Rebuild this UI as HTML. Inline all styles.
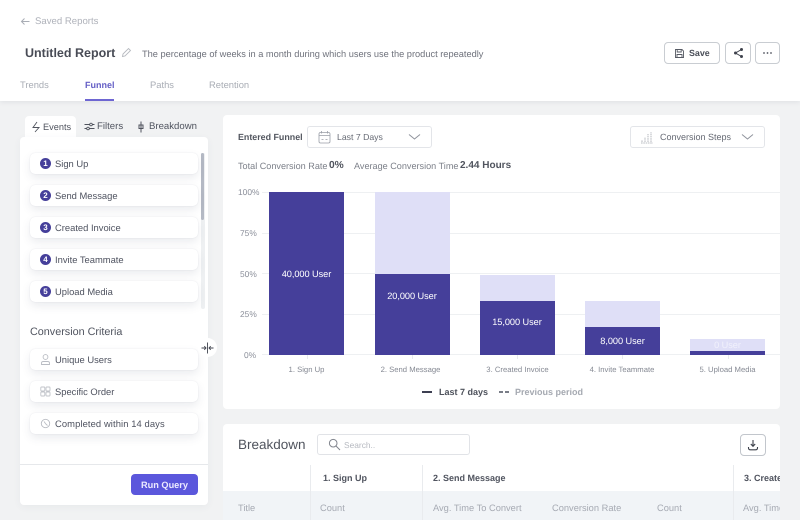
<!DOCTYPE html>
<html><head><meta charset="utf-8">
<style>
html,body{margin:0;padding:0;width:800px;height:520px;overflow:hidden;background:#f1f2f3}
#r{position:relative;width:800px;height:520px;overflow:hidden;font-family:"Liberation Sans",sans-serif;filter:blur(.35px);text-rendering:geometricPrecision}
#r div,#r svg{position:absolute}
.t{white-space:nowrap;line-height:14px;height:14px}
.c{transform:translateX(-50%)}
.card{background:#fff;border-radius:5px;left:30px;width:168px;height:21.5px;box-shadow:0 4px 9px rgba(60,70,100,.1),0 0 1px rgba(60,70,100,.16)}
.n{left:40px;width:11px;height:11px;border-radius:50%;background:#453f9a;color:#fff;font-size:8px;font-weight:bold;line-height:11px;text-align:center}
.lb{font-size:9.4px;color:#4f5360;left:55px}
.ax{font-size:8.4px;color:#8b8f9a}
.g{left:262px;width:518px;height:1px;background:#eef0f2}
.d{background:#453f9a}.l{background:#dfdff7}
.bl{color:#fff;font-size:9.2px;letter-spacing:-.05px}
.xl{font-size:7.7px;color:#858993}
.th{font-size:9px;font-weight:bold;color:#50545f}
.tc{font-size:9.3px;color:#a6aab3}
.btn{background:#fff;border:1px solid #c9cdd2;border-radius:4px;box-sizing:border-box;height:22px;top:42px}
</style></head><body><div id="r">

<div style="left:0;top:0;width:800px;height:101px;background:#fff;box-shadow:0 1px 5px rgba(60,70,90,.1)"></div>

<svg style="left:20px;top:16px" width="11" height="11" viewBox="0 0 11 11" fill="none" stroke="#a9adb5" stroke-width="1"><path d="M9.5 5.5H1.5M4.5 2.5L1.5 5.5L4.5 8.5"/></svg>
<div class="t" style="left:35px;top:15px;font-size:9.6px;color:#afb2ba">Saved Reports</div>

<div class="t" style="left:25px;top:46px;font-size:12.5px;font-weight:bold;color:#484b55">Untitled Report</div>
<svg style="left:121px;top:47px" width="11" height="11" viewBox="0 0 11 11" fill="none" stroke="#b7bac0" stroke-width=".9"><path d="M1.5 9.5L2 7L7.5 1.5L9.5 3.5L4 9Z"/></svg>
<div class="t" style="left:142px;top:47px;font-size:9.25px;color:#6f727c">The percentage of weeks in a month during which users use the product repeatedly</div>

<div class="t" style="left:20px;top:78px;font-size:9.4px;color:#a9adb5">Trends</div>
<div class="t" style="left:85px;top:78px;font-size:9px;font-weight:bold;color:#655fc6">Funnel</div>
<div style="left:85px;top:99px;width:29px;height:2px;background:#6e66d2"></div>
<div class="t" style="left:150px;top:78px;font-size:9.4px;color:#a9adb5">Paths</div>
<div class="t" style="left:209px;top:78px;font-size:9.4px;color:#a9adb5">Retention</div>

<div class="btn" style="left:664px;width:56px"></div>
<svg style="left:674px;top:48px" width="11" height="11" viewBox="0 0 11 11" fill="none" stroke="#565a64" stroke-width=".9"><path d="M1.5 1.5H8L9.5 3V9.5H1.5ZM3.2 1.5V4H7.2V1.5M3 9.5V6.5H8V9.5"/></svg>
<div class="t" style="left:689px;top:46px;font-size:8.9px;font-weight:bold;color:#4a4e58">Save</div>
<div class="btn" style="left:725px;width:26px"></div>
<svg style="left:733px;top:47px" width="11" height="12" viewBox="0 0 11 12" fill="none" stroke="#3f434d" stroke-width="1"><path d="M8.5 2.500L2.500 6L8.500 9.500"/><circle cx="8.500" cy="2.500" r="1" fill="#3f434d"/><circle cx="2.500" cy="6" r="1" fill="#3f434d"/><circle cx="8.500" cy="9.500" r="1" fill="#3f434d"/></svg>
<div class="btn" style="left:755px;width:25px"></div>
<svg style="left:762px;top:51px" width="11" height="4" viewBox="0 0 11 4" fill="#50545e"><circle cx="2" cy="2" r=".9"/><circle cx="5.500" cy="2" r=".9"/><circle cx="9" cy="2" r=".9"/></svg>

<!-- left panel -->
<div style="left:25px;top:116px;width:51px;height:24px;background:#fff;border-radius:4px 4px 0 0"></div>
<div style="left:20px;top:137px;width:188px;height:368px;background:#fff;border-radius:4px;box-shadow:0 2px 8px rgba(60,70,100,.05)"></div>
<svg style="left:31px;top:121px" width="10" height="12" viewBox="0 0 10 12" fill="none" stroke="#4f535d" stroke-width=".9"><path d="M6 1L2 6.500H8L4 11"/></svg>
<div class="t" style="left:43px;top:120px;font-size:9.2px;color:#50545f">Events</div>
<svg style="left:84px;top:121px" width="11" height="11" viewBox="0 0 11 11" fill="none" stroke="#4f535d" stroke-width=".9"><path d="M.5 3.500H10.500M.5 7.500H10.500"/><circle cx="7" cy="3.500" r="1.300" fill="#fff"/><circle cx="4" cy="7.500" r="1.300" fill="#fff"/></svg>
<div class="t" style="left:97px;top:120px;font-size:9.6px;color:#50545f">Filters</div>
<svg style="left:137px;top:121px" width="8" height="12" viewBox="0 0 8 12" fill="none" stroke="#4f535d" stroke-width="1"><path d="M4 .5V11.500M2 4H6V7.500H2Z"/></svg>
<div class="t" style="left:149px;top:120px;font-size:9.6px;color:#50545f">Breakdown</div>

<div style="left:201px;top:153px;width:4px;height:156px;background:#eef0f2;border-radius:2px"></div>
<div style="left:201px;top:153px;width:3px;height:67px;background:#b4b9c4;border-radius:2px"></div>

<div class="card" style="top:152.700px"></div><div class="n" style="top:158px">1</div><div class="t lb" style="top:157px">Sign Up</div>
<div class="card" style="top:184.700px"></div><div class="n" style="top:190px">2</div><div class="t lb" style="top:189px">Send Message</div>
<div class="card" style="top:216.700px"></div><div class="n" style="top:222px">3</div><div class="t lb" style="top:221px">Created Invoice</div>
<div class="card" style="top:248.700px"></div><div class="n" style="top:254px">4</div><div class="t lb" style="top:253px">Invite Teammate</div>
<div class="card" style="top:280.700px"></div><div class="n" style="top:286px">5</div><div class="t lb" style="top:285px">Upload Media</div>

<div class="t" style="left:30px;top:325px;font-size:10.800px;color:#50545f">Conversion Criteria</div>

<div class="card" style="top:348.700px"></div>
<svg style="left:40px;top:353px" width="11" height="13" viewBox="0 0 11 13" fill="none" stroke="#b9bcc3" stroke-width=".9"><circle cx="5.500" cy="4" r="2.400"/><path d="M1.500 11.500V10Q1.500 8.500 3.500 8.500H7.500Q9.500 8.500 9.500 10V11.500Z"/></svg>
<div class="t lb" style="top:353px">Unique Users</div>
<div class="card" style="top:380.700px"></div>
<svg style="left:40px;top:386px" width="11" height="11" viewBox="0 0 11 11" fill="none" stroke="#c0c3c9" stroke-width=".9"><rect x=".8" y="1" width="4" height="4" rx=".7"/><rect x="6" y="1" width="4" height="4" rx=".7"/><rect x=".8" y="6" width="4" height="4" rx=".7"/><rect x="6" y="6" width="4" height="4" rx=".7"/></svg>
<div class="t lb" style="top:385px">Specific Order</div>
<div class="card" style="top:412.700px"></div>
<svg style="left:40px;top:418px" width="11" height="11" viewBox="0 0 11 11" fill="none" stroke="#b9bcc3" stroke-width=".9"><circle cx="5.500" cy="5.500" r="4.200"/><path d="M4 3.500L5.800 6L7.500 7.500"/></svg>
<div class="t lb" style="top:417px;letter-spacing:.1px">Completed within 14 days</div>

<div style="left:20px;top:464px;width:188px;height:1px;background:#e6e8eb"></div>
<div style="left:131px;top:474px;width:67px;height:21px;background:#5b57dc;border-radius:4px"></div>
<div class="t c" style="left:164.500px;top:478px;font-size:9.200px;font-weight:bold;color:#eceaff">Run Query</div>

<!-- splitter -->
<div style="left:198px;top:338px;width:19px;height:19px;border-radius:50%;background:#fff"></div>
<svg style="left:201px;top:342px" width="13" height="12" viewBox="0 0 13 12" fill="none" stroke="#41454f" stroke-width=".9"><path d="M6.500 .5V11.500M.5 6H5M3.300 4.200L5 6L3.300 7.800M12.500 6H8M9.700 4.200L8 6L9.700 7.800"/></svg>

<!-- chart panel -->
<div style="left:223px;top:115px;width:557px;height:294px;background:#fff;border-radius:4px"></div>
<div class="t" style="left:238px;top:130px;font-size:8.900px;font-weight:bold;color:#52565f">Entered Funnel</div>
<div style="left:307px;top:126px;width:125px;height:22px;box-sizing:border-box;border:1px solid #e3e5e9;border-radius:3px;background:#fff"></div>
<svg style="left:318px;top:130px" width="13" height="14" viewBox="0 0 13 14" fill="none" stroke="#9a9ea7" stroke-width=".8"><rect x="1" y="2.500" width="11" height="10.500" rx="1.500"/><path d="M1 5.500H12M3.500 1V3.500M9.500 1V3.500M3.500 9.500H5.500M7.500 9.500H9.500"/></svg>
<div class="t" style="left:337px;top:130px;font-size:8.700px;color:#666a74">Last 7 Days</div>
<svg style="left:408px;top:133px" width="13" height="8" viewBox="0 0 13 8" fill="none" stroke="#8f939c" stroke-width="1"><path d="M1 1.500L6.500 6L12 1.500"/></svg>

<div style="left:630px;top:126px;width:135px;height:22px;box-sizing:border-box;border:1px solid #e3e5e9;border-radius:3px;background:#fff"></div>
<svg style="left:640px;top:130px" width="14" height="14" viewBox="0 0 14 14" fill="none" stroke="#a2a6ae" stroke-width=".8"><path d="M1 13H13M2 12V10M5 12V7M8 12V4M11 12V2" stroke-dasharray="1.600 .7"/></svg>
<div class="t" style="left:660px;top:130px;font-size:9px;color:#666a74">Conversion Steps</div>
<svg style="left:741px;top:133px" width="13" height="8" viewBox="0 0 13 8" fill="none" stroke="#8f939c" stroke-width="1"><path d="M1 1.500L6.500 6L12 1.500"/></svg>

<div class="t" style="left:238px;top:159px;font-size:9.100px;color:#7b7f88">Total Conversion Rate</div>
<div class="t" style="left:329px;top:159px;font-size:10.200px;font-weight:bold;color:#50545e">0%</div>
<div class="t" style="left:354px;top:159px;font-size:9.100px;color:#7b7f88">Average Conversion Time</div>
<div class="t" style="left:460px;top:159px;font-size:10px;font-weight:bold;color:#50545e">2.44 Hours</div>

<div class="t ax" style="left:238px;top:185px">100%</div>
<div class="t ax" style="left:240px;top:226px">75%</div>
<div class="t ax" style="left:240px;top:267px">50%</div>
<div class="t ax" style="left:240px;top:307px">25%</div>
<div class="t ax" style="left:244px;top:348px">0%</div>

<div class="g" style="top:192px"></div>
<div class="g" style="top:233px"></div>
<div class="g" style="top:273px"></div>
<div class="g" style="top:314px"></div>
<div class="g" style="top:354px"></div>

<div class="d" style="left:269px;top:192px;width:75px;height:163px"></div>
<div class="l" style="left:374.500px;top:192px;width:75px;height:82px"></div>
<div class="d" style="left:374.500px;top:274px;width:75px;height:81px"></div>
<div class="l" style="left:479.500px;top:275px;width:75px;height:25.500px"></div>
<div class="d" style="left:479.500px;top:300.500px;width:75px;height:54.500px"></div>
<div class="l" style="left:585px;top:301px;width:75px;height:26px"></div>
<div class="d" style="left:585px;top:327px;width:75px;height:28px"></div>
<div class="l" style="left:690px;top:339px;width:75px;height:12px"></div>
<div class="d" style="left:690px;top:351px;width:75px;height:4px"></div>

<div class="t c bl" style="left:306.500px;top:267px">40,000 User</div>
<div class="t c bl" style="left:412px;top:289px">20,000 User</div>
<div class="t c bl" style="left:517px;top:315px">15,000 User</div>
<div class="t c bl" style="left:622.500px;top:334px">8,000 User</div>
<div class="t c bl" style="left:727.500px;top:338px;color:#f1f1fc">0 User</div>

<div style="left:307px;top:355px;width:1px;height:4px;background:#e8eaed"></div>
<div style="left:412px;top:355px;width:1px;height:4px;background:#e8eaed"></div>
<div style="left:517px;top:355px;width:1px;height:4px;background:#e8eaed"></div>
<div style="left:622px;top:355px;width:1px;height:4px;background:#e8eaed"></div>
<div style="left:728px;top:355px;width:1px;height:4px;background:#e8eaed"></div>

<div class="t c xl" style="left:306.500px;top:363px">1. Sign Up</div>
<div class="t c xl" style="left:410.500px;top:363px">2. Send Message</div>
<div class="t c xl" style="left:517.500px;top:363px">3. Created Invoice</div>
<div class="t c xl" style="left:622px;top:363px">4. Invite Teammate</div>
<div class="t c xl" style="left:727.500px;top:363px">5. Upload Media</div>

<div style="left:422px;top:391px;width:10px;height:2px;background:#3d3f52"></div>
<div class="t" style="left:439px;top:385px;font-size:9px;font-weight:bold;color:#4d515b">Last 7 days</div>
<div style="left:499px;top:391px;width:4px;height:2px;background:#797d87"></div>
<div style="left:505px;top:391px;width:4px;height:2px;background:#797d87"></div>
<div class="t" style="left:515px;top:385px;font-size:9px;font-weight:bold;color:#a5a9b1">Previous period</div>

<!-- breakdown -->
<div style="left:223px;top:424px;width:557px;height:96px;background:#fff;border-radius:4px 4px 0 0;overflow:hidden"></div>
<div style="left:223px;top:491px;width:557px;height:29px;background:#f1f4f7"></div>
<div class="t" style="left:238px;top:438px;font-size:13.500px;color:#50545e">Breakdown</div>
<div style="left:317px;top:434px;width:153px;height:21px;box-sizing:border-box;border:1px solid #e1e3e7;border-radius:3px;background:#fff"></div>
<svg style="left:328px;top:438px" width="13" height="13" viewBox="0 0 13 13" fill="none" stroke="#80848d" stroke-width="1"><circle cx="5.200" cy="5.200" r="3.800"/><path d="M8 8L12 12"/></svg>
<div class="t" style="left:344px;top:438px;font-size:8.400px;color:#b7bac1">Search..</div>
<div class="btn" style="left:740px;top:434px;width:26px;height:22px;border-color:#c2c6cc"></div>
<svg style="left:747px;top:439px" width="12" height="12" viewBox="0 0 12 12" fill="none" stroke="#3c404a" stroke-width="1.100"><path d="M6 1V7M3.800 5L6 7.300L8.200 5"/><path d="M1.500 8V9Q1.500 10.800 3.500 10.800H8.500Q10.500 10.800 10.500 9V8"/></svg>

<div style="left:310px;top:465px;width:1px;height:55px;background:#e9ebee"></div>
<div style="left:422px;top:465px;width:1px;height:55px;background:#e9ebee"></div>
<div style="left:733px;top:465px;width:1px;height:55px;background:#e9ebee"></div>

<div class="t th" style="left:323px;top:471px">1. Sign Up</div>
<div class="t th" style="left:433px;top:471px">2. Send Message</div>
<div style="left:744px;top:465px;width:36px;height:26px;overflow:hidden"><div class="t th" style="left:0;top:6px">3. Created Invoice</div></div>

<div class="t tc" style="left:238px;top:501px">Title</div>
<div class="t tc" style="left:320px;top:501px">Count</div>
<div class="t tc" style="left:433px;top:501px">Avg. Time To Convert</div>
<div class="t tc" style="left:552px;top:501px">Conversion Rate</div>
<div class="t tc" style="left:657px;top:501px">Count</div>
<div style="left:743px;top:491px;width:37px;height:29px;overflow:hidden"><div class="t tc" style="left:0;top:10px">Avg. Time To Convert</div></div>

</div></body></html>
